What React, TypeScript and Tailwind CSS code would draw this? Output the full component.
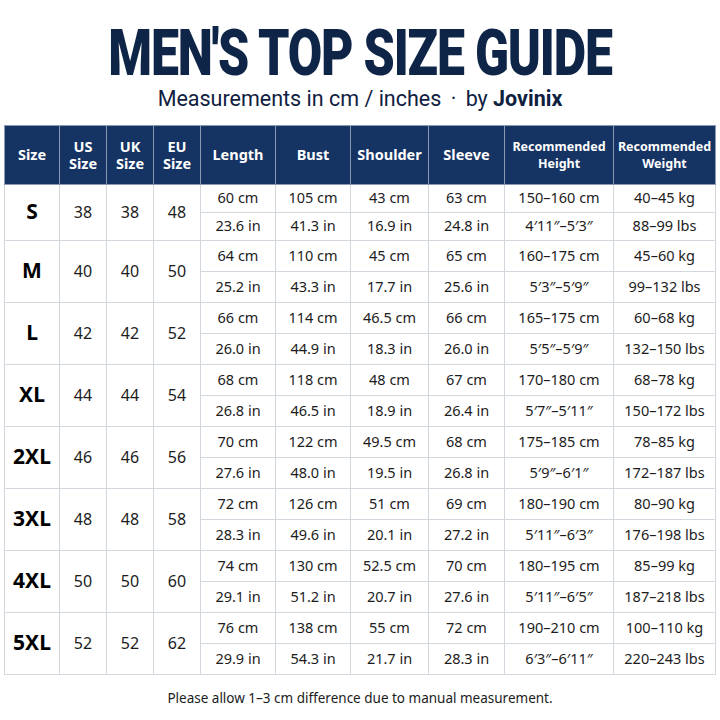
import React from 'react';

type SizeRow = {
  size: string;
  us: string;
  uk: string;
  eu: string;
  cm: string[];
  inch: string[];
};

const rows: SizeRow[] = [
  { size: 'S', us: '38', uk: '38', eu: '48', cm: ['60 cm', '105 cm', '43 cm', '63 cm', '150–160 cm', '40–45 kg'], inch: ['23.6 in', '41.3 in', '16.9 in', '24.8 in', '4′11″–5′3″', '88–99 lbs'] },
  { size: 'M', us: '40', uk: '40', eu: '50', cm: ['64 cm', '110 cm', '45 cm', '65 cm', '160–175 cm', '45–60 kg'], inch: ['25.2 in', '43.3 in', '17.7 in', '25.6 in', '5′3″–5′9″', '99–132 lbs'] },
  { size: 'L', us: '42', uk: '42', eu: '52', cm: ['66 cm', '114 cm', '46.5 cm', '66 cm', '165–175 cm', '60–68 kg'], inch: ['26.0 in', '44.9 in', '18.3 in', '26.0 in', '5′5″–5′9″', '132–150 lbs'] },
  { size: 'XL', us: '44', uk: '44', eu: '54', cm: ['68 cm', '118 cm', '48 cm', '67 cm', '170–180 cm', '68–78 kg'], inch: ['26.8 in', '46.5 in', '18.9 in', '26.4 in', '5′7″–5′11″', '150–172 lbs'] },
  { size: '2XL', us: '46', uk: '46', eu: '56', cm: ['70 cm', '122 cm', '49.5 cm', '68 cm', '175–185 cm', '78–85 kg'], inch: ['27.6 in', '48.0 in', '19.5 in', '26.8 in', '5′9″–6′1″', '172–187 lbs'] },
  { size: '3XL', us: '48', uk: '48', eu: '58', cm: ['72 cm', '126 cm', '51 cm', '69 cm', '180–190 cm', '80–90 kg'], inch: ['28.3 in', '49.6 in', '20.1 in', '27.2 in', '5′11″–6′3″', '176–198 lbs'] },
  { size: '4XL', us: '50', uk: '50', eu: '60', cm: ['74 cm', '130 cm', '52.5 cm', '70 cm', '180–195 cm', '85–99 kg'], inch: ['29.1 in', '51.2 in', '20.7 in', '27.6 in', '5′11″–6′5″', '187–218 lbs'] },
  { size: '5XL', us: '52', uk: '52', eu: '62', cm: ['76 cm', '138 cm', '55 cm', '72 cm', '190–210 cm', '100–110 kg'], inch: ['29.9 in', '54.3 in', '21.7 in', '28.3 in', '6′3″–6′11″', '220–243 lbs'] },
];

const headers = ['Size', 'US\nSize', 'UK\nSize', 'EU\nSize', 'Length', 'Bust', 'Shoulder', 'Sleeve', 'Recommended\nHeight', 'Recommended\nWeight'];
const widths = [55, 47, 47, 47, 75, 75, 78, 76, 109, 102];

export default function App() {
  return (
    <div className="w-[720px] h-[720px] bg-white flex flex-col items-center" style={{ fontFamily: '"Noto Sans", "Open Sans", sans-serif' }}>
      <div className="mt-[26px] h-[54px] w-full flex items-center justify-center">
        {/* condensed display face: Roboto Black stretched vertically */}
        <h1
          className="whitespace-nowrap text-[50px] leading-[42px] font-black text-[#0f2547] scale-y-[1.28] tracking-[-1.2px]"
          style={{ fontFamily: 'Roboto, "DejaVu Sans", sans-serif' }}
        >
          MEN'S TOP SIZE GUIDE
        </h1>
      </div>
      <p className="mt-[8px] text-[21.5px] leading-none text-[#10213f]" style={{ fontFamily: 'Roboto, "Noto Sans", sans-serif' }}>
        Measurements in cm / inches <span className="mx-[4px]">·</span> by <span className="font-bold">Jovinix</span>
      </p>

      <table className="mt-[15px] table-fixed border-collapse text-[#1c1c1c]">
        <colgroup>
          {widths.map((w, i) => (
            <col key={i} style={{ width: w }} />
          ))}
        </colgroup>
        <thead>
          <tr className="h-[59px] bg-[#163463]">
            {headers.map((h) => (
              <th
                key={h}
                className="border border-[#8a9ab3] text-white font-bold text-center whitespace-pre-line leading-[17px] text-[14.5px] px-0"
                style={h.startsWith('Recommended') ? { fontSize: 12.5 } : undefined}
              >
                {h}
              </th>
            ))}
          </tr>
        </thead>
        <tbody>
          {rows.map((r, ri) => {
            const hh = ri === 0 ? 'h-[28px]' : 'h-[31px]';
            return (
              <React.Fragment key={r.size}>
                <tr className={hh}>
                  <td rowSpan={2} className="border border-[#d3d7de] text-center text-[21px] font-bold text-black">
                    {r.size}
                  </td>
                  <td rowSpan={2} className="border border-[#d3d7de] text-center text-[16px]">{r.us}</td>
                  <td rowSpan={2} className="border border-[#d3d7de] text-center text-[16px]">{r.uk}</td>
                  <td rowSpan={2} className="border border-[#d3d7de] text-center text-[16px]">{r.eu}</td>
                  {r.cm.map((v, i) => (
                    <td key={i} className="border border-[#d3d7de] text-center text-[14.5px] whitespace-nowrap p-0">
                      {v}
                    </td>
                  ))}
                </tr>
                <tr className={hh}>
                  {r.inch.map((v, i) => (
                    <td key={i} className="border border-[#d3d7de] text-center text-[14.5px] whitespace-nowrap p-0">
                      {v}
                    </td>
                  ))}
                </tr>
              </React.Fragment>
            );
          })}
        </tbody>
      </table>

      <p className="mt-[13px] text-[13.5px] text-[#1c1c1c]">Please allow 1–3 cm difference due to manual measurement.</p>
    </div>
  );
}
